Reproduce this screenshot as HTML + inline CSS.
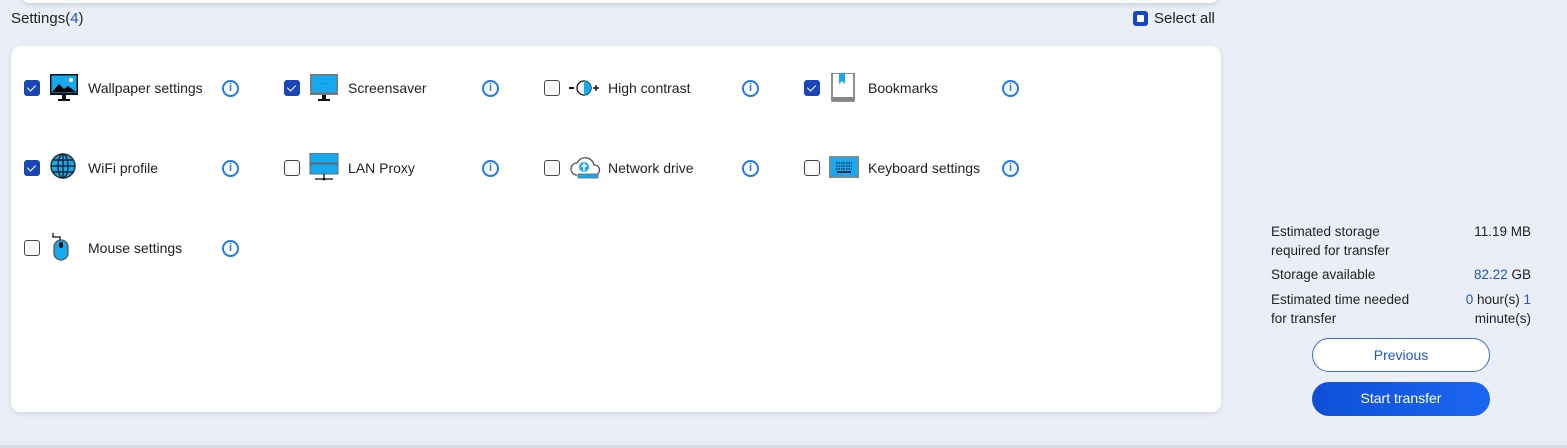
<!DOCTYPE html>
<html><head><meta charset="utf-8"><style>
*{box-sizing:border-box;margin:0;padding:0}
body{width:1567px;height:448px;background:#eaeff7;font-family:"Liberation Sans",sans-serif;color:#222;position:relative;overflow:hidden;font-size:14px}
.topcard{position:absolute;left:20px;top:-20px;width:1200px;height:23px;background:#fff;border-radius:10px;box-shadow:0 2px 6px rgba(0,0,0,.12)}
.title{position:absolute;left:11px;top:10px;font-size:15px}
.title b{font-weight:normal;color:#1f55c9}
.sel{position:absolute;left:1133px;top:10px;font-size:15px;display:flex;align-items:center;gap:6px}
.sel i{width:15px;height:15px;border-radius:3px;background:#1447c4;display:inline-block;position:relative}
.sel i:after{content:"";position:absolute;left:4px;top:4px;width:7px;height:7px;background:#fff;border-radius:1px}
.card{position:absolute;left:11px;top:46px;width:1210px;height:366px;background:#fff;border-radius:10px;box-shadow:0 2px 6px rgba(0,0,0,.1)}
.it{position:absolute;height:30px;display:flex;align-items:center}
.cb{position:absolute;left:0;width:16px;height:16px;border:1.5px solid #444;border-radius:3px;background:#fff}
.cb.on{background:#1a47b8;border-color:#1a47b8}
.cb.on:after{content:"";position:absolute;left:4px;top:2px;width:4px;height:7px;border:solid #fff;border-width:0 1.5px 1.5px 0;transform:rotate(45deg)}
.ic{position:absolute;left:25px;top:0}
.lb{position:absolute;left:64px;white-space:nowrap;font-size:14px;color:#222}
.inf{position:absolute;left:198px;width:17px;height:17px;border:2px solid #1e7bf0;border-radius:50%;color:#1e7bf0;font-size:11px;font-weight:bold;text-align:center;line-height:13px}
.info{position:absolute;left:1271px;font-size:13.5px;color:#222;line-height:19px}
.r{position:absolute;right:36px;text-align:right;font-size:13.5px;line-height:19px}
.blue{color:#1f55c9}
.btn{position:absolute;left:1312px;width:178px;height:34px;border-radius:17px;text-align:center;line-height:32px;font-size:14px}
</style></head><body>
<div class="topcard"></div>
<div class="title">Settings(<b>4</b>)</div>
<div class="sel"><i></i>Select all</div>
<div class="card"></div>

<div class="it" style="left:24px;top:73px"><div class="cb on" style="top:7px"></div>
<svg class="ic" width="30" height="30" viewBox="0 0 30 30"><rect x="1" y="1" width="28" height="21" fill="#111"/><rect x="2.5" y="2.5" width="25" height="17" fill="#17a9f0"/><path d="M3 19l7-8 5 5 4-3 8 6z" fill="#000"/><circle cx="22" cy="7" r="2" fill="#fff"/><rect x="13" y="22" width="4" height="4" fill="#111"/><rect x="9" y="26" width="12" height="2" fill="#111"/></svg>
<span class="lb">Wallpaper settings</span><span class="inf">i</span></div>

<div class="it" style="left:284px;top:73px"><div class="cb on" style="top:7px"></div>
<svg class="ic" width="30" height="30" viewBox="0 0 30 30"><rect x="1" y="1" width="28" height="21" fill="#777"/><rect x="2.5" y="2.5" width="25" height="17" fill="#17a9f0"/><text x="15" y="12" font-size="6" text-anchor="middle" fill="#035">···</text><rect x="13" y="22" width="4" height="4" fill="#111"/><rect x="9" y="26" width="12" height="2" fill="#111"/></svg>
<span class="lb">Screensaver</span><span class="inf">i</span></div>

<div class="it" style="left:544px;top:73px"><div class="cb" style="top:7px"></div>
<svg class="ic" width="32" height="30" viewBox="0 0 32 30"><rect x="0" y="14" width="5" height="2" fill="#111"/><circle cx="15" cy="15" r="7" fill="#fff" stroke="#111" stroke-width="1.3"/><path d="M15 8a7 7 0 0 1 0 14z" fill="#17a9f0"/><path d="M24 15h6M27 12v6" stroke="#111" stroke-width="1.5"/></svg>
<span class="lb">High contrast</span><span class="inf">i</span></div>

<div class="it" style="left:804px;top:73px"><div class="cb on" style="top:7px"></div>
<svg class="ic" width="30" height="30" viewBox="0 0 30 30"><rect x="3" y="0" width="22" height="28" fill="#fff" stroke="#555" stroke-width="1.3"/><rect x="3" y="24" width="22" height="4" fill="#888"/><path d="M10 0v11l3-3 3 3V0z" fill="#17a9f0"/></svg>
<span class="lb">Bookmarks</span><span class="inf">i</span></div>

<div class="it" style="left:24px;top:153px"><div class="cb on" style="top:7px"></div>
<svg class="ic" width="30" height="30" viewBox="0 0 30 30"><circle cx="14" cy="13" r="12" fill="#17a9f0" stroke="#333" stroke-width="1.5"/><ellipse cx="14" cy="13" rx="5" ry="12" fill="none" stroke="#111" stroke-width="1.2"/><path d="M2 13h24M14 1v24M4 7h20M4 19h20" stroke="#111" stroke-width="1.2"/></svg>
<span class="lb">WiFi profile</span><span class="inf">i</span></div>

<div class="it" style="left:284px;top:153px"><div class="cb" style="top:7px"></div>
<svg class="ic" width="30" height="30" viewBox="0 0 30 30"><rect x="1" y="0" width="28" height="10" fill="#17a9f0" stroke="#666"/><rect x="1" y="11" width="28" height="10" fill="#17a9f0" stroke="#666"/><path d="M15 21v5M6 26h18" stroke="#111" stroke-width="1.3"/><circle cx="15" cy="26" r="1.5" fill="#111"/></svg>
<span class="lb">LAN Proxy</span><span class="inf">i</span></div>

<div class="it" style="left:544px;top:153px"><div class="cb" style="top:7px"></div>
<svg class="ic" width="32" height="30" viewBox="0 0 32 30"><path d="M8 22a6 6 0 0 1 0-12a9 9 0 0 1 17 2a5 5 0 0 1 1 10" fill="#fff" stroke="#555" stroke-width="1.3"/><circle cx="15" cy="14" r="5" fill="#17a9f0"/><path d="M15 11v7M12.5 14l2.5-3 2.5 3" stroke="#fff" stroke-width="1.5" fill="none"/><rect x="9" y="21" width="20" height="4" fill="#17a9f0" stroke="#666" stroke-width=".8"/></svg>
<span class="lb">Network drive</span><span class="inf">i</span></div>

<div class="it" style="left:804px;top:153px"><div class="cb" style="top:7px"></div>
<svg class="ic" width="30" height="30" viewBox="0 0 30 30"><rect x="0" y="3" width="30" height="22" fill="#888"/><rect x="1.5" y="4.5" width="27" height="19" fill="#17a9f0"/><path d="M7 10h16M7 13h16M7 16h16" stroke="#124" stroke-width="1.2" stroke-dasharray="1.5 1"/><path d="M8 19h14" stroke="#000" stroke-width="1.5"/></svg>
<span class="lb">Keyboard settings</span><span class="inf">i</span></div>

<div class="it" style="left:24px;top:233px"><div class="cb" style="top:7px"></div>
<svg class="ic" width="30" height="30" viewBox="0 0 30 30"><path d="M4 0v4h7v5" stroke="#111" stroke-width="1.3" fill="none"/><rect x="5" y="7" width="14" height="20" rx="7" fill="#17a9f0" stroke="#555" stroke-width="1.3"/><rect x="10" y="9" width="4" height="6" rx="2" fill="#111"/></svg>
<span class="lb">Mouse settings</span><span class="inf">i</span></div>

<div class="info" style="top:222px">Estimated storage<br>required for transfer</div>
<div class="r" style="top:222px">11.19 MB</div>
<div class="info" style="top:265px">Storage available</div>
<div class="r" style="top:265px"><span class="blue">82.22</span> GB</div>
<div class="info" style="top:290px">Estimated time needed<br>for transfer</div>
<div class="r" style="top:290px"><span class="blue">0</span> hour(s) <span class="blue">1</span><br>minute(s)</div>

<div class="btn" style="top:338px;background:#fff;border:1.5px solid #3d6fd6;color:#1f55c9">Previous</div>
<div class="btn" style="top:382px;background:linear-gradient(90deg,#0f4fd6,#1a66f2);color:#fff">Start transfer</div>
<div style="position:absolute;left:0;top:445px;width:1567px;height:3px;background:#d8dce8"></div>
</body></html>
